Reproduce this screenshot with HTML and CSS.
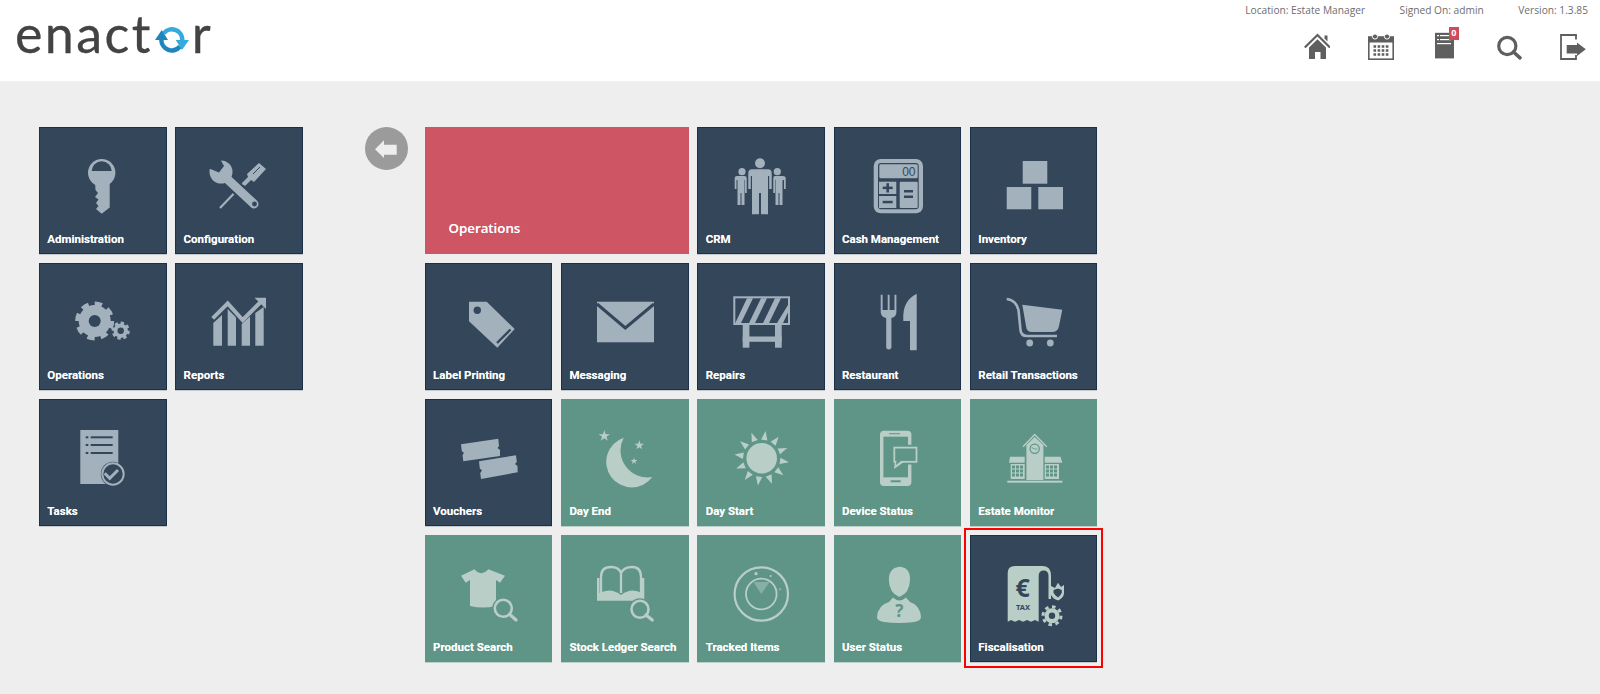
FILE: index.html
```html
<!DOCTYPE html>
<html lang="en">
<head>
    <meta charset="UTF-8">
    <meta name="viewport" content="width=device-width, initial-scale=1.0">
    <title>Enactor Estate Manager</title>
    <link rel="stylesheet" href="styles.css">
</head>
<body>
    <div class="header">
        <div class="logo">
            <span>enact</span>
            <svg class="logo-o" viewBox="0 0 36 36">
                <path d="M7.35 18 A10.5 10.5 0 0 0 26 24.5" fill="none" stroke="#1d86bd" stroke-width="4.5"/>
                <path d="M28.35 18 A10.5 10.5 0 0 0 9.5 11.5" fill="none" stroke="#35aadd" stroke-width="4.5"/>
                <path d="M1 18 L7.7 8 L14 18 Z" fill="#1d86bd"/>
                <path d="M21.7 18 L28 28 L35 18 Z" fill="#35aadd"/>
            </svg>
            <span>r</span>
        </div>
        <div class="header-right">
            <div class="meta">
                <span>Location: Estate Manager</span>
                <span>Signed On: admin</span>
                <span>Version: 1.3.85</span>
            </div>
            <div class="toolbar">
                <svg class="tool" viewBox="0 0 26 28">
                    <path d="M20.5 3.5 h3 v6 l-3 -3 Z"/>
                    <path d="M0.8 15.5 L13.5 3 L26 15.5" fill="none" stroke="#5f5f5f" stroke-width="2.2"/>
                    <path d="M5 15.5 L13.5 7.2 L22 15.5 V27 H16.5 V20 H11 V27 H5 Z"/>
                </svg>
                <svg class="tool" viewBox="0 0 26 28">
                    <rect x="0.8" y="5" width="24.4" height="22.2" fill="none" stroke="#5f5f5f" stroke-width="1.6"/>
                    <rect x="0.8" y="5" width="24.4" height="5.5"/>
                    <circle cx="7" cy="4.5" r="2.6" stroke="#fff"/>
                    <circle cx="19" cy="4.5" r="2.6" stroke="#fff"/>
                    <g stroke="#5f5f5f" stroke-width="2.6" stroke-dasharray="2.6 1.5">
                        <line x1="5.5" y1="14.5" x2="21" y2="14.5"/>
                        <line x1="5.5" y1="18.5" x2="21" y2="18.5"/>
                        <line x1="5.5" y1="22.5" x2="21" y2="22.5"/>
                    </g>
                </svg>
                <div class="tool-doc">
                    <svg class="tool" viewBox="0 0 26 28">
                        <rect x="3" y="0.8" width="19" height="25.6"/>
                        <g fill="#fff">
                            <rect x="5" y="3" width="2" height="1.2"/><rect x="8" y="3" width="9" height="1.2"/>
                            <rect x="5" y="7" width="2" height="1.2"/><rect x="8" y="7" width="11" height="1.2"/>
                            <rect x="5" y="11" width="14" height="1.2"/>
                        </g>
                    </svg>
                    <span class="badge">0</span>
                </div>
                <svg class="tool" viewBox="0 0 26 28">
                    <circle cx="11.3" cy="14" r="8.6" fill="none" stroke="#5f5f5f" stroke-width="3.2"/>
                    <line x1="17.5" y1="20" x2="24" y2="25.8" stroke="#5f5f5f" stroke-width="3.6" stroke-linecap="round"/>
                </svg>
                <svg class="tool" viewBox="0 0 26 28">
                    <path d="M16 7.5 V3 H1 V27 H16 V23" fill="none" stroke="#5f5f5f" stroke-width="1.8"/>
                    <path d="M6.7 13 H17 V10.5 L25.8 17.3 L17 24 V21.5 H6.7 Z"/>
                </svg>
            </div>
        </div>
    </div>

    <div class="main">
        <div class="grid grid-side">
            <div class="tile navy">
                <svg class="icon" viewBox="0 0 127.5 100">
                    <circle cx="62.7" cy="45.7" r="13.7"/>
                    <path class="hole" d="M52.7 44 A10 9.7 0 0 1 72.7 44 Z"/>
                    <path d="M56 55 H70.7 V80.5 L62.7 86.7 L57 82 L59.5 79 L57 76 L59.5 72.5 L56 70 L59 66 L56.5 63 Z"/>
                </svg>
                <span class="label">Administration</span>
            </div>
            <div class="tile navy">
                <svg class="icon" viewBox="0 0 127.5 100">
                    <line class="line" x1="69" y1="56" x2="45" y2="81" stroke-width="2.2"/>
                    <path d="M72 47 L84 36 L91 42 L79 55 L76 53 L70 59 L67 56 L73 50 Z"/>
                    <line class="hole-line" x1="78" y1="47" x2="85" y2="40" stroke-width="1"/>
                    <line class="hole-line" x1="49" y1="49" x2="80" y2="78" stroke-width="13"/>
                    <circle cx="46" cy="45" r="11.5"/>
                    <polygon class="hole" points="33,41 44,45.5 49,39 44,30 33,30"/>
                    <line class="line" x1="49" y1="49" x2="79" y2="77" stroke-width="9" stroke-linecap="round"/>
                    <circle class="hole" cx="79.5" cy="77" r="2.4"/>
                </svg>
                <span class="label">Configuration</span>
            </div>
            <div class="tile navy">
                <svg class="icon" viewBox="0 0 127.5 100">
                    <circle cx="55.7" cy="58" r="16"/>
                    <circle class="line" cx="55.7" cy="58" r="16.7" stroke-width="5.6" pathLength="16" stroke-dasharray="1.1 .9"/>
                    <circle class="hole" cx="55.7" cy="58" r="6"/>
                    <circle cx="81.7" cy="67.7" r="7.2"/>
                    <circle class="line" cx="81.7" cy="67.7" r="7.6" stroke-width="3" pathLength="16" stroke-dasharray="1.1 .9"/>
                    <circle class="hole" cx="81.7" cy="67.7" r="3.2"/>
                </svg>
                <span class="label">Operations</span>
            </div>
            <div class="tile navy">
                <svg class="icon" viewBox="0 0 127.5 100">
                    <polygon points="38.3,82.7 38.3,60 47,52 47,82.7"/>
                    <polygon points="52.7,82.7 52.7,46 61,54.5 61,82.7"/>
                    <polygon points="66.7,82.7 66.7,61 75,53.5 75,82.7"/>
                    <polygon points="80.3,82.7 80.3,50 88.7,44 88.7,82.7"/>
                    <polyline class="line" points="37.7,55.3 52.7,40.3 67.7,57 87.7,37" stroke-width="4"/>
                    <polygon points="79.5,34.7 91,34.7 91,46"/>
                </svg>
                <span class="label">Reports</span>
            </div>
            <div class="tile navy">
                <svg class="icon" viewBox="0 0 127.5 100">
                    <rect x="41.3" y="31" width="38" height="54"/>
                    <g class="hole">
                        <rect x="46.7" y="37.3" width="2.6" height="2"/><rect x="51.7" y="37.3" width="22" height="2"/>
                        <rect x="46.7" y="45" width="2.6" height="2"/><rect x="51.7" y="45" width="22" height="2"/>
                        <rect x="46.7" y="53" width="2.6" height="2"/><rect x="51.7" y="53" width="22" height="2"/>
                    </g>
                    <circle class="hole" cx="74" cy="75" r="12.2"/>
                    <circle class="line" cx="74" cy="75" r="10.7" stroke-width="2"/>
                    <polyline class="line" points="65.7,74.3 70.7,79.3 79,71" stroke-width="3"/>
                </svg>
                <span class="label">Tasks</span>
            </div>
        </div>

        <div class="back">
            <svg viewBox="0 0 43 43"><polygon points="10,22.3 19,13.3 19,17.7 31.7,17.7 31.7,27.7 19,27.7 19,31"/></svg>
        </div>

        <div class="grid grid-menu">
            <div class="tile tile-wide red"><span class="label">Operations</span></div>
            <div class="tile navy">
                <svg class="icon" viewBox="0 0 127.5 100">
                    <circle cx="63" cy="36.3" r="5"/>
                    <path d="M55 42.3 H71 Q74.7 42.3 74.7 46.5 V62 H72.2 V49 H71 V87.3 H64 V66 H62 V87.3 H55 V49 H53.8 V62 H51.3 V46.5 Q51.3 42.3 55 42.3 Z"/>
                    <circle cx="45" cy="44.7" r="3.6"/>
                    <path d="M40 49 H47.5 Q49.7 49 49.7 51 V66 H48 V53 H47.5 V78 H44.5 V66 H43.5 V78 H40.5 V53 H39.5 V62 H37.7 V51 Q37.7 49 40 49 Z"/>
                    <circle cx="80.3" cy="44.7" r="3.6"/>
                    <path d="M78 49 H85.5 Q88.7 49 88.7 51 V62 H87 V53 H85.5 V78 H82.5 V66 H81.5 V78 H78.5 V53 H78 V66 H76.3 V51 Q76.3 49 78 49 Z"/>
                </svg>
                <span class="label">CRM</span>
            </div>
            <div class="tile navy">
                <svg class="icon" viewBox="0 0 127.5 100">
                    <rect x="39.7" y="32" width="49.3" height="54.3" rx="7"/>
                    <rect class="hole" x="44" y="36" width="40.7" height="46.3" rx="3"/>
                    <rect x="45.3" y="37.3" width="38.4" height="14" rx="1.5"/>
                    <text class="digits" x="81.5" y="48.5">00</text>
                    <rect x="45" y="54.7" width="17.3" height="12.3"/>
                    <rect x="45" y="69" width="17.3" height="12"/>
                    <rect x="65.7" y="54.7" width="18" height="26.3" rx="1"/>
                    <g class="hole">
                        <rect x="48.7" y="59.6" width="10" height="2.5"/><rect x="52.4" y="56.2" width="2.6" height="9.3"/>
                        <rect x="48.7" y="73.8" width="10" height="2.5"/>
                        <rect x="70" y="63" width="9" height="2.5"/><rect x="70" y="68.5" width="9" height="2.5"/>
                    </g>
                </svg>
                <span class="label">Cash Management</span>
            </div>
            <div class="tile navy">
                <svg class="icon" viewBox="0 0 127.5 100">
                    <rect x="52.7" y="34" width="24.6" height="22.7"/>
                    <rect x="36.7" y="60" width="24.6" height="22.3"/>
                    <rect x="68.3" y="60" width="24.7" height="22.3"/>
                </svg>
                <span class="label">Inventory</span>
            </div>

            <div class="tile navy">
                <svg class="icon" viewBox="0 0 127.5 100">
                    <polygon points="44,38.7 61.7,38.7 89.7,66 72.3,84.7 44,58.3"/>
                    <circle class="hole" cx="52.3" cy="47.3" r="3.7"/>
                    <line class="hole-line" x1="85.5" y1="66.5" x2="72" y2="80" stroke-width="2.4"/>
                </svg>
                <span class="label">Label Printing</span>
            </div>
            <div class="tile navy">
                <svg class="icon" viewBox="0 0 127.5 100">
                    <rect x="36" y="38.7" width="57" height="40.6"/>
                    <polyline class="hole-line" points="36,41 64.3,65 93,41" stroke-width="3"/>
                </svg>
                <span class="label">Messaging</span>
            </div>
            <div class="tile navy">
                <svg class="icon" viewBox="0 0 127.5 100">
                    <rect x="36.3" y="33.3" width="56.7" height="28.7"/>
                    <rect class="hole" x="38.3" y="35.3" width="52.7" height="24.7"/>
                    <polygon points="38.3,60 44,60 56,35.3 50,35.3"/>
                    <polygon points="52,60 58,60 70,35.3 64,35.3"/>
                    <polygon points="66,60 72,60 84,35.3 78,35.3"/>
                    <polygon points="80,60 86,60 91,49.5 91,42"/>
                    <rect x="45.7" y="62" width="6.7" height="22.7"/>
                    <rect x="78" y="62" width="6.7" height="22.7"/>
                    <rect x="45.7" y="73.5" width="39" height="5.3"/>
                </svg>
                <span class="label">Repairs</span>
            </div>
            <div class="tile navy">
                <svg class="icon" viewBox="0 0 127.5 100">
                    <path d="M46.7 31.7 H48.6 V47 H53.7 V31.7 H55.6 V47 H60.5 V31.7 H62.4 V49 Q62.4 54 57.4 55 V85 Q54.8 88 52.2 85 V55 Q46.7 54 46.7 49 Z"/>
                    <path d="M82.7 30.7 V87.3 H76 V58 H69.3 V52 Q70 37 82.7 30.7 Z"/>
                </svg>
                <span class="label">Restaurant</span>
            </div>
            <div class="tile navy">
                <svg class="icon" viewBox="0 0 127.5 100">
                    <path class="line" d="M36.7 36 Q46 37 48.5 47 L50.5 67 Q51 73 57 73 H87" stroke-width="2.6"/>
                    <path d="M52.3 41.7 L92.3 46.7 L89 63 Q88 69 82 69 H62 Q56.5 69 56 63 Z"/>
                    <circle cx="59.7" cy="80" r="3.4"/>
                    <circle cx="80.3" cy="80" r="3.4"/>
                </svg>
                <span class="label">Retail Transactions</span>
            </div>

            <div class="tile navy">
                <svg class="icon" viewBox="0 0 127.5 100">
                    <polygon points="36,45.3 73.3,39.7 74,47 72.5,49 75,51 75,57 38.3,62.3 37.5,56 39,54 36.8,52"/>
                    <polygon points="54,62.3 91,56.3 91.8,63 90,65 92.5,67 92.7,73.3 56,80 55.2,74 57,71.5 54.8,69.5"/>
                </svg>
                <span class="label">Vouchers</span>
            </div>
            <div class="tile green">
                <svg class="icon" viewBox="0 0 127.5 100">
                    <path d="M62.7 38.7 A25.5 25.5 0 1 0 91.3 78 A27 27 0 0 1 62.7 38.7 Z"/>
                    <polygon transform="translate(43.3 37) scale(6)" points="0,-1 .22,-.31 .95,-.31 .36,.12 .59,.81 0,.38 -.59,.81 -.36,.12 -.95,-.31 -.22,-.31"/>
                    <polygon transform="translate(78.3 46.3) scale(5)" points="0,-1 .22,-.31 .95,-.31 .36,.12 .59,.81 0,.38 -.59,.81 -.36,.12 -.95,-.31 -.22,-.31"/>
                    <polygon transform="translate(73 62) scale(3.6)" points="0,-1 .22,-.31 .95,-.31 .36,.12 .59,.81 0,.38 -.59,.81 -.36,.12 -.95,-.31 -.22,-.31"/>
                </svg>
                <span class="label">Day End</span>
            </div>
            <div class="tile green">
                <svg class="icon" viewBox="0 0 127.5 100">
                    <circle cx="64.7" cy="59.3" r="15.3"/>
                    <g transform="translate(64.7 59.3)">
                        <polygon transform="rotate(8)" points="-3.2,-18.5 3.2,-18.5 0,-27.5"/>
                        <polygon transform="rotate(38)" points="-3.2,-18.5 3.2,-18.5 0,-27.5"/>
                        <polygon transform="rotate(68)" points="-3.2,-18.5 3.2,-18.5 0,-27.5"/>
                        <polygon transform="rotate(98)" points="-3.2,-18.5 3.2,-18.5 0,-27.5"/>
                        <polygon transform="rotate(128)" points="-3.2,-18.5 3.2,-18.5 0,-27.5"/>
                        <polygon transform="rotate(158)" points="-3.2,-18.5 3.2,-18.5 0,-27.5"/>
                        <polygon transform="rotate(188)" points="-3.2,-18.5 3.2,-18.5 0,-27.5"/>
                        <polygon transform="rotate(218)" points="-3.2,-18.5 3.2,-18.5 0,-27.5"/>
                        <polygon transform="rotate(248)" points="-3.2,-18.5 3.2,-18.5 0,-27.5"/>
                        <polygon transform="rotate(278)" points="-3.2,-18.5 3.2,-18.5 0,-27.5"/>
                        <polygon transform="rotate(308)" points="-3.2,-18.5 3.2,-18.5 0,-27.5"/>
                        <polygon transform="rotate(338)" points="-3.2,-18.5 3.2,-18.5 0,-27.5"/>
                    </g>
                </svg>
                <span class="label">Day Start</span>
            </div>
            <div class="tile green">
                <svg class="icon" viewBox="0 0 127.5 100">
                    <rect x="46" y="31.7" width="31.4" height="55.3" rx="4"/>
                    <rect class="hole" x="49.4" y="37.7" width="24.6" height="40.6"/>
                    <rect class="hole" x="56.7" y="81.3" width="10" height="2"/>
                    <rect class="hole" x="55" y="34.2" width="11" height="1"/>
                    <polygon class="hole" points="57,45.7 85,45.7 85,65.5 69,65.5 58,72 59,65.5 57,65.5"/>
                    <rect x="59.4" y="47.7" width="24" height="16"/>
                    <polygon points="61,62 60,70 70,63"/>
                    <rect class="hole" x="61.2" y="49.5" width="20.4" height="12.4"/>
                    <polygon class="hole" points="62.6,61.5 62,66 67.5,61.5"/>
                </svg>
                <span class="label">Device Status</span>
            </div>
            <div class="tile green">
                <svg class="icon" viewBox="0 0 127.5 100">
                    <polyline class="line" points="53,47.7 64.7,35.5 76.7,47.7" stroke-width="1.4"/>
                    <polygon points="56.4,46 64.7,38 73.4,46 73.4,81 56.4,81"/>
                    <circle class="hole" cx="64.7" cy="49.7" r="5.2"/>
                    <circle cx="64.7" cy="49.7" r="4"/>
                    <polyline class="hole-line" points="61.7,48.6 65,50 67.3,50" stroke-width=".8"/>
                    <polygon points="40,57.7 54.7,57.7 54.7,63.7 39,63.7"/>
                    <polygon points="74.7,57.7 90.5,57.7 92.3,63.7 74.7,63.7"/>
                    <rect x="40.7" y="65" width="14" height="15"/>
                    <rect x="74.7" y="65" width="14.3" height="15"/>
                    <g class="hole-line" stroke-width="3" stroke-dasharray="3 1">
                        <line x1="42" y1="68" x2="53.5" y2="68"/>
                        <line x1="42" y1="72" x2="53.5" y2="72"/>
                        <line x1="42" y1="76" x2="53.5" y2="76"/>
                        <line x1="76" y1="68" x2="87.5" y2="68"/>
                        <line x1="76" y1="72" x2="87.5" y2="72"/>
                        <line x1="76" y1="76" x2="87.5" y2="76"/>
                    </g>
                    <rect x="37.3" y="81.7" width="55" height="2"/>
                </svg>
                <span class="label">Estate Monitor</span>
            </div>

            <div class="tile green">
                <svg class="icon" viewBox="0 0 127.5 100">
                    <path d="M49.5 34.3 Q56 42 63.3 34.3 L80 40.7 L75 47.7 L71 45 V71 Q58 74 45 71 V45 L40.7 47.7 L36 40.7 Z"/>
                    <circle class="hole" cx="78.3" cy="73.3" r="11"/>
                    <circle class="line" cx="78.3" cy="73.3" r="8.5" stroke-width="2.6"/>
                    <line class="line" x1="84.5" y1="79.3" x2="91" y2="85" stroke-width="3.2" stroke-linecap="round"/>
                </svg>
                <span class="label">Product Search</span>
            </div>
            <div class="tile green">
                <svg class="icon" viewBox="0 0 127.5 100">
                    <path class="line" d="M40 58 V42 Q40 32 50 32 Q58 32 60 38 V58" stroke-width="2.3"/>
                    <path class="line" d="M60 38 Q63 32 71 32 Q80 32 80 42 V58" stroke-width="2.3"/>
                    <path d="M36 43 H38.5 V58 Q50 52 60 60 Q70 52 81 58 V43 H83.3 V65.7 H36 Z"/>
                    <circle class="hole" cx="79" cy="74.3" r="11"/>
                    <circle class="line" cx="79" cy="74.3" r="8.5" stroke-width="2.6"/>
                    <line class="line" x1="85" y1="80" x2="91.3" y2="85" stroke-width="3.2" stroke-linecap="round"/>
                </svg>
                <span class="label">Stock Ledger Search</span>
            </div>
            <div class="tile green">
                <svg class="icon" viewBox="0 0 127.5 100">
                    <circle class="line" cx="64.3" cy="59" r="26.7" stroke-width="2.2"/>
                    <circle class="line" cx="64.3" cy="59" r="15.3" stroke-width="1.8"/>
                    <polygon class="faint" points="64.3,59 56.3,47 72.5,47"/>
                    <circle cx="59" cy="38.7" r="1.6"/>
                    <circle cx="73.7" cy="41" r="1"/>
                    <circle class="faint" cx="83" cy="54.3" r="1.3"/>
                </svg>
                <span class="label">Tracked Items</span>
            </div>
            <div class="tile green">
                <svg class="icon" viewBox="0 0 127.5 100">
                    <path d="M65 31.7 Q76 32 76 44 Q76 58 65.3 62 Q55 58 54.8 44 Q54.8 33 65 31.7 Z"/>
                    <path d="M43 82 Q44 70 55 67 L59 62.5 Q65.3 68.5 72 62.5 L76 67 Q86 70 87 82 Q87 86 80 87 Q65 89 50 87 Q43 86 43 82 Z"/>
                    <text class="glyph-mark" x="65.3" y="81.5">?</text>
                </svg>
                <span class="label">User Status</span>
            </div>
            <div class="tile navy">
                <svg class="icon icon-pale" viewBox="0 0 127.5 100">
                    <path d="M37.7 38 Q37.7 31 45 31 H73 Q81 31 81 41 V64 H68.7 V86.7 L65 85 L61 86.7 L57 85 L53 86.7 L49 85 L45 86.7 L41 85 L37.7 86.7 Z"/>
                    <path class="hole" d="M68.7 64 V41 Q68.7 35.5 73.7 35.5 Q78.5 35.5 78.5 41 V64 Z"/>
                    <text class="glyph-euro" x="52.7" y="61.5">€</text>
                    <text class="glyph-tax" x="53" y="75.3">TAX</text>
                    <path d="M81 51 L85 53 L88 47.7 L91 52 L94 50 V58 Q94 63 88 65.5 Q83 64 81 60 Z"/>
                    <path class="hole" d="M83.5 55 L88 53.5 L91.8 55 V57.5 Q91 60.5 88 62.5 Q84.5 60.5 83.5 57.5 Z"/>
                    <circle class="hole" cx="82" cy="80.7" r="11.5"/>
                    <circle cx="82" cy="80.7" r="7.5"/>
                    <circle class="line" cx="82" cy="80.7" r="9" stroke-width="3" pathLength="16" stroke-dasharray="1 1"/>
                    <circle class="hole" cx="82" cy="80.7" r="3.2"/>
                </svg>
                <span class="label">Fiscalisation</span>
                <div class="highlight"></div>
            </div>
        </div>
    </div>
</body>
</html>
```

FILE: styles.css
```css
body {
    margin: 0;
    background-color: #eeeeee;
    font-family: "Open Sans", Arial, sans-serif;
}
.header {
    display: flex;
    justify-content: space-between;
    height: 81px;
    background-color: #ffffff;
}
.logo {
    display: flex;
    align-items: flex-start;
    padding: 2px 0 0 15px;
    font-family: Lato, Arial, sans-serif;
    font-size: 52px;
    line-height: 62px;
    color: #434343;
    letter-spacing: 2.4px;
    -webkit-text-stroke: 0.3px #434343;
}
.logo-o {
    width: 36px;
    height: 36px;
    margin: 20px 2px 0 1px;
}
.header-right {
    display: flex;
    flex-direction: column;
    align-items: flex-end;
}
.meta {
    display: flex;
    gap: 34.5px;
    padding: 2px 12px 0 0;
    font-size: 10.2px;
    line-height: 16px;
    color: #6e6e6e;
}
.toolbar {
    display: flex;
    gap: 38px;
    padding: 14px 14px 0 0;
}
.tool {
    display: block;
    width: 26px;
    height: 28px;
    fill: #5f5f5f;
}
.tool-doc {
    position: relative;
}
.badge {
    position: absolute;
    top: -5px;
    left: 17px;
    width: 9.5px;
    height: 12.5px;
    background-color: #cf4a5a;
    color: #ffffff;
    font-size: 9px;
    font-weight: bold;
    line-height: 12px;
    text-align: center;
}
.main {
    display: flex;
    align-items: flex-start;
    padding: 45.7px 0 32px 39px;
}
.grid {
    display: grid;
    grid-auto-rows: 127.5px;
    gap: 8.6px 8.8px;
}
.grid-side {
    grid-template-columns: repeat(2, 127.5px);
}
.grid-menu {
    grid-template-columns: repeat(5, 127.5px);
    margin-left: 17px;
}
.back {
    width: 43px;
    height: 43px;
    margin-left: 62px;
    border-radius: 50%;
    background-color: #9b9b9b;
}
.back svg {
    display: block;
    fill: #eeeeee;
}
.tile {
    --tile: #34465a;
    --ink: #a3b1bd;
    position: relative;
    display: flex;
    flex-direction: column;
    justify-content: flex-end;
    background-color: var(--tile);
}
.navy {
    box-shadow: inset 0 0 0 1px #1b3149, 0 1px 0 #c4c9ce;
}
.green {
    --tile: #5f9586;
    --ink: #b8cec7;
    box-shadow: 0 1px 0 #bcd0ca;
}
.red {
    --tile: #cd5564;
}
.tile-wide {
    grid-column: span 2;
}
.icon {
    display: block;
    flex: none;
    width: 127.5px;
    height: 100px;
    fill: var(--ink);
}
.icon-pale {
    --ink: #b8cec7;
}
.hole {
    fill: var(--tile);
}
.line {
    fill: none;
    stroke: var(--ink);
}
.hole-line {
    fill: none;
    stroke: var(--tile);
}
.faint {
    opacity: 0.45;
}
.label {
    height: 27.5px;
    padding-left: 8.3px;
    color: #ffffff;
    font-family: Roboto, Arial, sans-serif;
    font-size: 11.5px;
    font-weight: bold;
    line-height: 25.5px;
    white-space: nowrap;
    text-shadow: 0 0 0.6px rgba(255, 255, 255, 0.6);
}
.tile-wide .label {
    height: auto;
    padding: 0 0 16.2px 23.7px;
    font-family: "Open Sans", Arial, sans-serif;
    font-size: 13.3px;
    font-weight: 600;
    line-height: 20px;
}
.digits {
    fill: var(--tile);
    font-family: "Liberation Sans", Arial, sans-serif;
    font-size: 12px;
    text-anchor: end;
}
.glyph-mark {
    fill: var(--tile);
    font-family: "Noto Sans", Arial, sans-serif;
    font-size: 17px;
    font-weight: bold;
    text-anchor: middle;
}
.glyph-euro {
    fill: var(--tile);
    font-family: "Noto Sans", Arial, sans-serif;
    font-size: 25px;
    font-weight: bold;
    text-anchor: middle;
}
.glyph-tax {
    fill: var(--tile);
    font-family: "Noto Sans", Arial, sans-serif;
    font-size: 7.5px;
    font-weight: bold;
    text-anchor: middle;
}
.highlight {
    position: absolute;
    top: -7px;
    right: -6px;
    bottom: -6px;
    left: -6px;
    border: 2.5px solid #ff0000;
}
```
